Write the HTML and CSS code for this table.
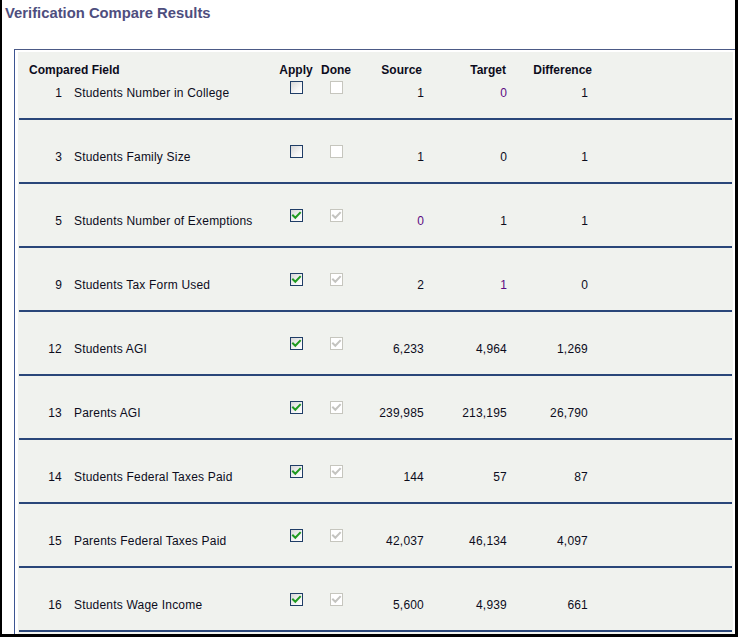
FILE: index.html
```html
<!DOCTYPE html>
<html>
<head>
<meta charset="utf-8">
<link rel="stylesheet" href="styles.css">
</head>
<body>
<div class="frame">
  <div class="title">Verification Compare Results</div>
  <div class="panel">
    <div class="grid">
      <div class="row head">
        <div class="h-field">Compared Field</div>
        <div class="c-apply">Apply</div>
        <div class="c-done">Done</div>
        <div class="num h-src">Source</div>
        <div class="num h-tgt">Target</div>
        <div class="num h-diff">Difference</div>
      </div>

      <div class="row first">
        <div class="c-no">1</div><div class="c-name">Students Number in College</div>
        <div class="c-apply"><span class="cb"></span></div>
        <div class="c-done"><span class="cb dis"></span></div>
        <div class="num">1</div><div class="num purple">0</div><div class="num">1</div>
      </div>

      <div class="row">
        <div class="c-no">3</div><div class="c-name">Students Family Size</div>
        <div class="c-apply"><span class="cb"></span></div>
        <div class="c-done"><span class="cb dis"></span></div>
        <div class="num">1</div><div class="num">0</div><div class="num">1</div>
      </div>

      <div class="row">
        <div class="c-no">5</div><div class="c-name">Students Number of Exemptions</div>
        <div class="c-apply"><span class="cb"><svg viewBox="0 0 11 11" width="11" height="11"><path d="M2 5.5 L4.3 7.8 L9 2.8" /></svg></span></div>
        <div class="c-done"><span class="cb dis"><svg viewBox="0 0 11 11" width="11" height="11"><path d="M2 5.5 L4.3 7.8 L9 2.8" /></svg></span></div>
        <div class="num purple">0</div><div class="num">1</div><div class="num">1</div>
      </div>

      <div class="row">
        <div class="c-no">9</div><div class="c-name">Students Tax Form Used</div>
        <div class="c-apply"><span class="cb"><svg viewBox="0 0 11 11" width="11" height="11"><path d="M2 5.5 L4.3 7.8 L9 2.8" /></svg></span></div>
        <div class="c-done"><span class="cb dis"><svg viewBox="0 0 11 11" width="11" height="11"><path d="M2 5.5 L4.3 7.8 L9 2.8" /></svg></span></div>
        <div class="num">2</div><div class="num purple">1</div><div class="num">0</div>
      </div>

      <div class="row">
        <div class="c-no">12</div><div class="c-name">Students AGI</div>
        <div class="c-apply"><span class="cb"><svg viewBox="0 0 11 11" width="11" height="11"><path d="M2 5.5 L4.3 7.8 L9 2.8" /></svg></span></div>
        <div class="c-done"><span class="cb dis"><svg viewBox="0 0 11 11" width="11" height="11"><path d="M2 5.5 L4.3 7.8 L9 2.8" /></svg></span></div>
        <div class="num">6,233</div><div class="num">4,964</div><div class="num">1,269</div>
      </div>

      <div class="row">
        <div class="c-no">13</div><div class="c-name">Parents AGI</div>
        <div class="c-apply"><span class="cb"><svg viewBox="0 0 11 11" width="11" height="11"><path d="M2 5.5 L4.3 7.8 L9 2.8" /></svg></span></div>
        <div class="c-done"><span class="cb dis"><svg viewBox="0 0 11 11" width="11" height="11"><path d="M2 5.5 L4.3 7.8 L9 2.8" /></svg></span></div>
        <div class="num">239,985</div><div class="num">213,195</div><div class="num">26,790</div>
      </div>

      <div class="row">
        <div class="c-no">14</div><div class="c-name">Students Federal Taxes Paid</div>
        <div class="c-apply"><span class="cb"><svg viewBox="0 0 11 11" width="11" height="11"><path d="M2 5.5 L4.3 7.8 L9 2.8" /></svg></span></div>
        <div class="c-done"><span class="cb dis"><svg viewBox="0 0 11 11" width="11" height="11"><path d="M2 5.5 L4.3 7.8 L9 2.8" /></svg></span></div>
        <div class="num">144</div><div class="num">57</div><div class="num">87</div>
      </div>

      <div class="row">
        <div class="c-no">15</div><div class="c-name">Parents Federal Taxes Paid</div>
        <div class="c-apply"><span class="cb"><svg viewBox="0 0 11 11" width="11" height="11"><path d="M2 5.5 L4.3 7.8 L9 2.8" /></svg></span></div>
        <div class="c-done"><span class="cb dis"><svg viewBox="0 0 11 11" width="11" height="11"><path d="M2 5.5 L4.3 7.8 L9 2.8" /></svg></span></div>
        <div class="num">42,037</div><div class="num">46,134</div><div class="num">4,097</div>
      </div>

      <div class="row">
        <div class="c-no">16</div><div class="c-name">Students Wage Income</div>
        <div class="c-apply"><span class="cb"><svg viewBox="0 0 11 11" width="11" height="11"><path d="M2 5.5 L4.3 7.8 L9 2.8" /></svg></span></div>
        <div class="c-done"><span class="cb dis"><svg viewBox="0 0 11 11" width="11" height="11"><path d="M2 5.5 L4.3 7.8 L9 2.8" /></svg></span></div>
        <div class="num">5,600</div><div class="num">4,939</div><div class="num">661</div>
      </div>
    </div>
  </div>
</div>
</body>
</html>
```
FILE: styles.css
```css
html, body {
  margin: 0;
  padding: 0;
  background: #ffffff;
}

.frame {
  width: 738px;
  height: 637px;
  box-sizing: border-box;
  border-left: 2px solid #000;
  border-right: 3px solid #000;
  border-bottom: 3px solid #000;
  overflow: hidden;
  font-family: "Liberation Sans", Arial, sans-serif;
  font-size: 12px;
  color: #0c0c1c;
}

.title {
  padding: 4px 0 27px 3px;
  line-height: 18px;
  font-size: 14.8px;
  font-weight: bold;
  color: #4e4e7e;
}

.panel {
  margin-left: 12px;
  border-top: 1px solid #4c5a86;
  border-left: 1px solid #3d5592;
  padding: 2px 2px 0 3px;
  height: 600px;
}

.grid {
  background: #f0f2ee;
  height: 100%;
  padding-top: 10px;
}

.row {
  display: grid;
  grid-template-columns: 43px 214px 40px 40px 68px 83px 81px;
  column-gap: 0;
  margin: 0 1px;
  line-height: 16px;
  padding: 29px 0 17px;
  border-bottom: 2px solid #2a4679;
  letter-spacing: 0.2px;
}

.row.head {
  padding: 0 0 7px;
  border-bottom: none;
  font-weight: bold;
  letter-spacing: 0;
}

.row.first {
  padding-top: 0;
}

.h-field {
  grid-column: 1 / span 2;
  padding-left: 10px;
}

.c-no {
  text-align: right;
}

.c-name {
  padding-left: 12px;
  white-space: nowrap;
}

.c-apply, .c-done {
  display: flex;
  justify-content: center;
  align-items: flex-start;
}

.num {
  text-align: right;
  white-space: nowrap;
}

.h-src { padding-right: 2px; }
.h-tgt { padding-right: 1px; }
.h-diff { margin-right: -4px; }

.purple { color: #5c0a82; }

.cb {
  display: flex;
  align-items: center;
  justify-content: center;
  width: 13px;
  height: 13px;
  box-sizing: border-box;
  margin-top: -4px;
  border: 1px solid #1f3d66;
  background: linear-gradient(135deg, #d6d6d6 0%, #f4f4f4 60%, #ffffff 100%);
}

.cb svg path {
  fill: none;
  stroke: #1f9a1f;
  stroke-width: 2;
  stroke-linecap: square;
}

.cb.dis {
  border-color: #c6c6be;
  background: #ffffff;
}

.cb.dis svg path {
  stroke: #c4c4c0;
}
```
